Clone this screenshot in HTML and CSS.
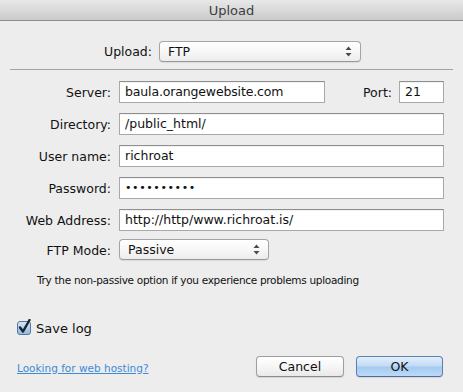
FILE: index.html
```html
<!DOCTYPE html>
<html>
<head>
<meta charset="utf-8">
<title>Upload</title>
<link rel="stylesheet" href="styles.css">
</head>
<body>
<div class="window">
  <div class="titlebar">Upload</div>
  <div class="content">
    <div class="upload-row">
      <span class="label">Upload:</span>
      <div class="select select-wide">
        <span>FTP</span>
        <svg class="arrows" width="7" height="11" viewBox="0 0 7 11"><path d="M3.5 0.5 L6.5 4 L0.5 4 Z M3.5 10.5 L6.5 7 L0.5 7 Z" fill="#4a4a4a"/></svg>
      </div>
    </div>
    <div class="sep"></div>
    <div class="form">
      <span class="label">Server:</span>
      <div class="server-row">
        <div class="field field-server">baula.orangewebsite.com</div>
        <span class="label port-label">Port:</span>
        <div class="field field-port">21</div>
      </div>
      <span class="label">Directory:</span>
      <div class="field">/public_html/</div>
      <span class="label">User name:</span>
      <div class="field">richroat</div>
      <span class="label">Password:</span>
      <div class="field dots">••••••••••</div>
      <span class="label">Web Address:</span>
      <div class="field">http://http/www.richroat.is/</div>
      <span class="label mode-label">FTP Mode:</span>
      <div class="select select-mode">
        <span>Passive</span>
        <svg class="arrows" width="7" height="11" viewBox="0 0 7 11"><path d="M3.5 0.5 L6.5 4 L0.5 4 Z M3.5 10.5 L6.5 7 L0.5 7 Z" fill="#4a4a4a"/></svg>
      </div>
    </div>
    <p class="hint">Try the non-passive option if you experience problems uploading</p>
    <div class="savelog">
      <svg class="check" width="16" height="17" viewBox="0 0 16 17">
        <defs>
          <linearGradient id="cb" x1="0" y1="0" x2="0" y2="1">
            <stop offset="0" stop-color="#d7e8f8"/>
            <stop offset="1" stop-color="#8db6e4"/>
          </linearGradient>
        </defs>
        <rect x="0.5" y="2.5" width="13" height="13" rx="2.5" fill="url(#cb)" stroke="#5a7696"/>
        <path d="M3 8.5 L6 12.5 L12.5 1" fill="none" stroke="#1c2430" stroke-width="2.4" stroke-linejoin="round" stroke-linecap="round"/>
      </svg>
      <span class="savelog-text">Save log</span>
    </div>
    <div class="footer">
      <a class="link" href="#">Looking for web hosting?</a>
      <div class="buttons">
        <div class="button">Cancel</div>
        <div class="button button-default">OK</div>
      </div>
    </div>
  </div>
</div>
</body>
</html>
```
FILE: styles.css
```css
html, body {
  margin: 0;
  padding: 0;
}
body {
  background: #ededed;
  font-family: "DejaVu Sans", "Liberation Sans", sans-serif;
  font-size: 12px;
  color: #111;
}
.window {
  width: 463px;
  height: 392px;
  overflow: hidden;
}
.titlebar {
  height: 20px;
  line-height: 21px;
  text-align: center;
  font-size: 13px;
  color: #3d3d3d;
  background: linear-gradient(#e8e8e8, #d6d6d6 60%, #cbcbcb);
  border-bottom: 1px solid #8c8c8c;
}
.content {
  display: flex;
  flex-direction: column;
}
.upload-row {
  margin-top: 20px;
  display: flex;
  justify-content: center;
  align-items: center;
  gap: 7px;
  padding-left: 2px;
}
.label {
  white-space: nowrap;
  font-size: 12.5px;
  color: #111;
}
.select {
  box-sizing: border-box;
  height: 21px;
  display: flex;
  align-items: center;
  justify-content: space-between;
  padding: 0 8px 0 8px;
  border: 1px solid #a4a4a4;
  border-bottom-color: #999;
  border-radius: 4px;
  background: linear-gradient(#ffffff, #f7f7f7 50%, #ececec);
  box-shadow: 0 1px 1px rgba(0, 0, 0, 0.08);
  font-size: 12.5px;
}
.select-wide {
  width: 202px;
}
.select-mode {
  width: 150px;
  margin-top: -2px;
  padding-left: 8px;
}
.arrows {
  display: block;
}
.sep {
  margin: 7px 10px 0 10px;
  height: 1px;
  background: #a3a3a3;
}
.form {
  margin-top: 11px;
  display: grid;
  grid-template-columns: 111px 325px;
  column-gap: 8px;
  row-gap: 10px;
  align-items: center;
}
.form > .label {
  text-align: right;
}
.field {
  box-sizing: border-box;
  height: 22px;
  line-height: 20px;
  padding: 0 5px;
  background: #fff;
  border: 1px solid #a9a9a9;
  border-top-color: #8e8e8e;
  box-shadow: inset 0 1px 1px rgba(0, 0, 0, 0.06);
  font-size: 12.5px;
  color: #111;
  white-space: nowrap;
  overflow: hidden;
}
.server-row {
  display: flex;
  align-items: center;
}
.field-server {
  width: 206px;
  letter-spacing: -0.15px;
}
.port-label {
  margin-left: auto;
  margin-right: 7px;
}
.field-port {
  width: 45px;
}
.dots {
  font-size: 11px;
  letter-spacing: 0.6px;
}
.hint {
  margin: 12px 0 0 37px;
  font-size: 10.5px;
  letter-spacing: -0.3px;
  line-height: 16px;
  color: #111;
}
.savelog {
  margin: 32px 0 0 17px;
  display: flex;
  align-items: center;
  height: 16px;
}
.check {
  display: block;
  margin-top: -2px;
}
.savelog-text {
  margin-left: 3px;
  font-size: 13px;
}
.footer {
  margin-top: 20px;
  padding: 0 20px 0 17px;
  display: flex;
  justify-content: space-between;
  align-items: center;
}
.link {
  font-size: 10.5px;
  color: #3d8ad6;
  text-decoration: underline;
  margin-top: 2px;
}
.buttons {
  display: flex;
  gap: 12px;
}
.button {
  box-sizing: border-box;
  width: 88px;
  height: 21px;
  line-height: 19px;
  text-align: center;
  font-size: 12.5px;
  color: #111;
  border: 1px solid #9e9e9e;
  border-bottom-color: #8a8a8a;
  border-radius: 4px;
  background: linear-gradient(#ffffff, #f6f6f6 50%, #e9e9e9);
  box-shadow: 0 1px 1px rgba(0, 0, 0, 0.1);
}
.button-default {
  width: 87px;
  border-color: #5e82b0;
  border-bottom-color: #4d6e9a;
  background: linear-gradient(#e3effb, #c3dcf5 45%, #a5cbf0 55%, #bcdaf7);
}
```
